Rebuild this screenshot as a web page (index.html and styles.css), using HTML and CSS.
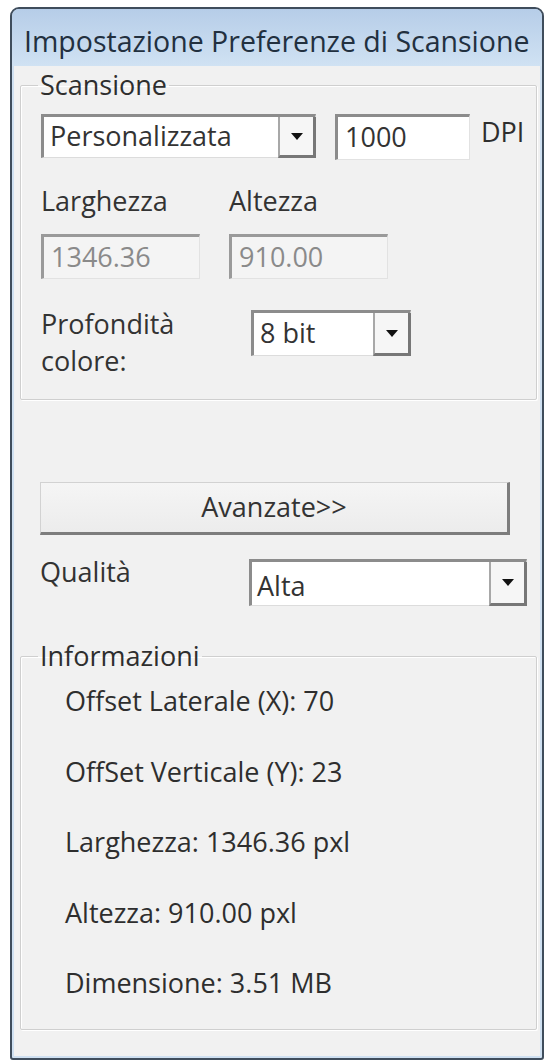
FILE: index.html
```html
<!DOCTYPE html>
<html lang="it">
<head>
<meta charset="utf-8">
<title>Impostazione Preferenze di Scansione</title>
<link rel="stylesheet" href="styles.css">
</head>
<body>
<div class="window">
  <div class="titlebar">Impostazione Preferenze di Scansione</div>
  <div class="client">
    <fieldset class="group group-scan">
      <legend>Scansione</legend>
      <div class="row row-preset">
        <div class="combo combo-preset">
          <span class="combo-text">Personalizzata</span>
          <span class="arrow"><svg width="12" height="7" viewBox="0 0 12 7"><path d="M0 0H12L6 7Z" fill="#111"/></svg></span>
        </div>
        <div class="field field-dpi">1000</div>
        <span class="unit">DPI</span>
      </div>
      <div class="row row-labels">
        <span class="lbl lbl-w">Larghezza</span>
        <span class="lbl">Altezza</span>
      </div>
      <div class="row row-size">
        <div class="field field-size disabled">1346.36</div>
        <div class="field field-size disabled">910.00</div>
      </div>
      <div class="row row-depth">
        <div class="lbl-depth">Profondità<br>colore:</div>
        <div class="combo combo-depth">
          <span class="combo-text">8 bit</span>
          <span class="arrow"><svg width="12" height="7" viewBox="0 0 12 7"><path d="M0 0H12L6 7Z" fill="#111"/></svg></span>
        </div>
      </div>
    </fieldset>

    <div class="btn">Avanzate&gt;&gt;</div>

    <div class="row row-quality">
      <span class="lbl-quality">Qualità</span>
      <div class="combo combo-quality">
        <span class="combo-text">Alta</span>
        <span class="arrow"><svg width="12" height="7" viewBox="0 0 12 7"><path d="M0 0H12L6 7Z" fill="#111"/></svg></span>
      </div>
    </div>

    <fieldset class="group group-info">
      <legend>Informazioni</legend>
      <div class="info-row">Offset Laterale (X): 70</div>
      <div class="info-row">OffSet Verticale (Y): 23</div>
      <div class="info-row">Larghezza: 1346.36 pxl</div>
      <div class="info-row">Altezza: 910.00 pxl</div>
      <div class="info-row">Dimensione: 3.51 MB</div>
    </fieldset>
  </div>
</div>
</body>
</html>
```
FILE: styles.css
```css
* { box-sizing: border-box; }
html, body { margin: 0; padding: 0; background: #ffffff; }
body {
  font-family: "Open Sans", "Noto Sans", sans-serif;
  font-size: 27px;
  line-height: 30px;
  color: #333333;
}
.window {
  margin: 7px 0 0 10px;
  width: 534px;
  height: 1053px;
  border: 2px solid #3f4d5c;
  border-radius: 9px 9px 3px 3px;
  background: #cfe0f1;
  display: flex;
  flex-direction: column;
  overflow: hidden;
}
.titlebar {
  height: 57px;
  flex: none;
  padding: 10px 0 0 12px;
  font-size: 28.5px;
  line-height: 44px;
  color: #22303f;
  background: linear-gradient(#b6cde8, #d0e2f3);
  white-space: nowrap;
}
.client {
  flex: 1;
  margin: 0 2px 2px 2px;
  background: #f1f1f1;
  padding: 4px 3px 0 6px;
}
.group {
  margin: 0;
  border: 1px solid #cfcfcf;
  box-shadow: inset 1px 1px 0 #ffffff, 1px 1px 0 #ffffff;
  border-radius: 2px;
  padding: 0 0 0 20px;
}
.group legend {
  padding: 0 2px;
  margin-left: -3px;
  line-height: 30px;
  color: #2e2e2e;
}
.group-scan { padding-top: 14px; padding-bottom: 30px; }
.row { display: flex; }
.combo {
  display: flex;
  background: #ffffff;
  border-top: 3px solid #8c8c8c;
  border-left: 3px solid #8c8c8c;
  border-right: 1px solid #dcdcdc;
  border-bottom: 1px solid #dcdcdc;
}
.combo-text {
  flex: 1;
  padding-left: 6px;
  white-space: nowrap;
}
.arrow {
  flex: none;
  width: 38px;
  display: flex;
  align-items: center;
  justify-content: center;
  background: #f6f6f6;
  border-left: 2px solid #a8a8a8;
  border-right: 3px solid #777777;
  border-bottom: 3px solid #777777;
  margin-bottom: -1px;
  margin-right: -1px;
}
.combo-preset { width: 275px; height: 44px; }
.combo-preset .combo-text { line-height: 38px; }
.field {
  background: #ffffff;
  border-top: 3px solid #8c8c8c;
  border-left: 3px solid #8c8c8c;
  border-right: 1px solid #e2e2e2;
  border-bottom: 1px solid #e2e2e2;
  padding-left: 7px;
}
.field-dpi { width: 135px; height: 46px; margin-left: 19px; line-height: 40px; }
.unit { margin-left: 11px; line-height: 36px; color: #2e2e2e; }
.row-labels { margin-top: 26px; }
.lbl-w { width: 188px; }
.row-size { margin-top: 18px; gap: 29px; }
.field-size { width: 159px; height: 45px; line-height: 40px; }
.field.disabled { background: #f4f4f4; color: #8a8a8a; border-top-color: #9a9a9a; border-left-color: #9a9a9a; }
.row-depth { margin-top: 26px; }
.lbl-depth { width: 210px; line-height: 37px; }
.combo-depth { width: 160px; height: 46px; margin-top: 5px; }
.combo-depth .combo-text { line-height: 40px; }
.group-scan .row-depth { margin-bottom: -10px; }
.btn {
  margin: 82px 0 0 20px;
  width: 470px;
  height: 53px;
  text-align: center;
  line-height: 48px;
  background: linear-gradient(#f5f5f5, #ececec);
  border-top: 1px solid #d2d2d2;
  border-left: 1px solid #d2d2d2;
  border-right: 3px solid #7d7d7d;
  border-bottom: 3px solid #7d7d7d;
  color: #333333;
}
.row-quality { margin: 22px 0 0 20px; }
.lbl-quality { width: 209px; }
.combo-quality { width: 278px; height: 47px; margin-top: 2px; }
.combo-quality .combo-text { line-height: 48px; padding-left: 5px; }
.group-info { margin-top: 35px; height: 389px; padding-top: 15px; padding-left: 44px; }
.group-info legend { margin-left: -27px; }
.info-row { margin-bottom: 40.5px; white-space: nowrap; color: #2e2e2e; }
```
